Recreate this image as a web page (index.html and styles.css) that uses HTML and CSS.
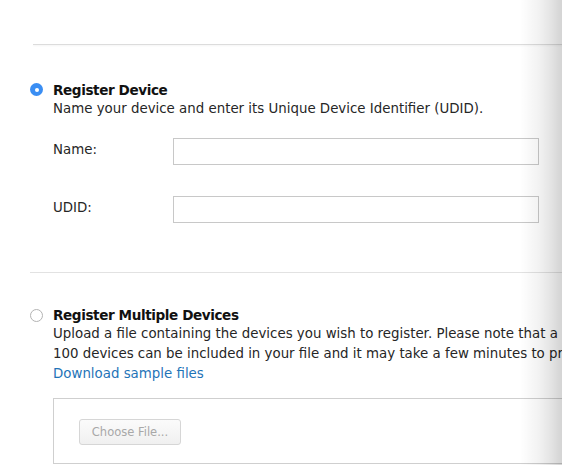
FILE: index.html
```html
<!DOCTYPE html>
<html>
<head>
<meta charset="utf-8">
<link rel="stylesheet" href="styles.css">
</head>
<body>
<div class="page">
  <div class="topline"></div>

  <section class="option first">
    <div class="option-head">
      <span class="radio checked"></span>
      <div class="option-body">
        <div class="title">Register Device</div>
        <div class="desc">Name your device and enter its Unique Device Identifier (UDID).</div>
      </div>
    </div>
    <div class="fields">
      <div class="field">
        <label class="label">Name:</label>
        <div class="input"></div>
      </div>
      <div class="field">
        <label class="label">UDID:</label>
        <div class="input"></div>
      </div>
    </div>
  </section>

  <div class="separator"></div>

  <section class="option second">
    <div class="option-head">
      <span class="radio"></span>
      <div class="option-body">
        <div class="title">Register Multiple Devices</div>
        <div class="desc nowrap">Upload a file containing the devices you wish to register. Please note that a maximum of</div>
        <div class="desc nowrap">100 devices can be included in your file and it may take a few minutes to process.</div>
        <a class="link">Download sample files</a>
      </div>
    </div>
    <div class="upload">
      <span class="button">Choose File...</span>
    </div>
  </section>
</div>
<div class="edge-shadow"></div>
</body>
</html>
```

FILE: styles.css
```css
html, body {
  margin: 0;
  padding: 0;
  background: #fff;
  overflow: hidden;
  width: 562px;
  height: 465px;
}
body {
  font-family: "DejaVu Sans", "Liberation Sans", sans-serif;
  font-size: 13.37px;
  color: #262626;
  position: relative;
}
.page {
  padding-left: 30px;
  padding-top: 44px;
}
.topline {
  margin-left: 3px;
  height: 1px;
  background: #dcdcdc;
  box-shadow: 0 1px 2px rgba(0,0,0,0.06);
}
.option.first {
  margin-top: 34px;
}
.option-head {
  display: flex;
  gap: 10px;
}
.radio {
  flex: none;
  width: 13px;
  height: 13px;
  box-sizing: border-box;
  border-radius: 50%;
  border: 1px solid #b3b3b3;
  background: #fff;
  margin-top: 4px;
  position: relative;
}
.second .radio {
  margin-top: 5px;
}
.radio.checked {
  border: none;
  background: #3a8ef3;
}
.radio.checked::after {
  content: "";
  position: absolute;
  left: 4.5px;
  top: 4.5px;
  width: 4px;
  height: 4px;
  border-radius: 50%;
  background: #fff;
}
.option-body {
  line-height: 20px;
}
.title {
  font-weight: bold;
  color: #111;
  font-size: 13.6px;
  letter-spacing: -0.42px;
  padding-top: 1px;
  margin-bottom: -1px;
}
.desc {
  color: #262626;
}
.nowrap {
  white-space: nowrap;
}
.fields {
  margin-top: 19px;
  margin-left: 23px;
  display: flex;
  flex-direction: column;
  gap: 31px;
}
.field {
  display: flex;
  align-items: center;
}
.label {
  width: 120px;
  color: #262626;
  padding-bottom: 4px;
}
.input {
  width: 366px;
  height: 27px;
  box-sizing: border-box;
  border: 1px solid #c8c8c8;
  background: #fff;
}
.separator {
  margin-top: 49px;
  height: 1px;
  background: #e2e2e2;
}
.option.second {
  margin-top: 31px;
}
.link {
  color: #1f74b8;
  display: block;
}
.upload {
  margin-top: 14px;
  margin-left: 23px;
  width: 560px;
  height: 66px;
  box-sizing: border-box;
  border: 1px solid #cfcfcf;
  padding: 20px 0 0 25px;
}
.button {
  display: inline-block;
  width: 102px;
  height: 26px;
  box-sizing: border-box;
  border: 1px solid #d6d6d6;
  border-radius: 3px;
  background: linear-gradient(#fbfbfb, #f0f0f0);
  color: #a8a8a8;
  font-size: 11.5px;
  line-height: 24px;
  text-align: center;
}
.edge-shadow {
  position: absolute;
  top: 0;
  right: 0;
  width: 42px;
  height: 465px;
  background: linear-gradient(to right, rgba(0,0,0,0) 0%, rgba(0,0,0,0.05) 45%, rgba(0,0,0,0.11) 75%, rgba(0,0,0,0.15) 90%, rgba(0,0,0,0.17) 100%);
  pointer-events: none;
}
```
